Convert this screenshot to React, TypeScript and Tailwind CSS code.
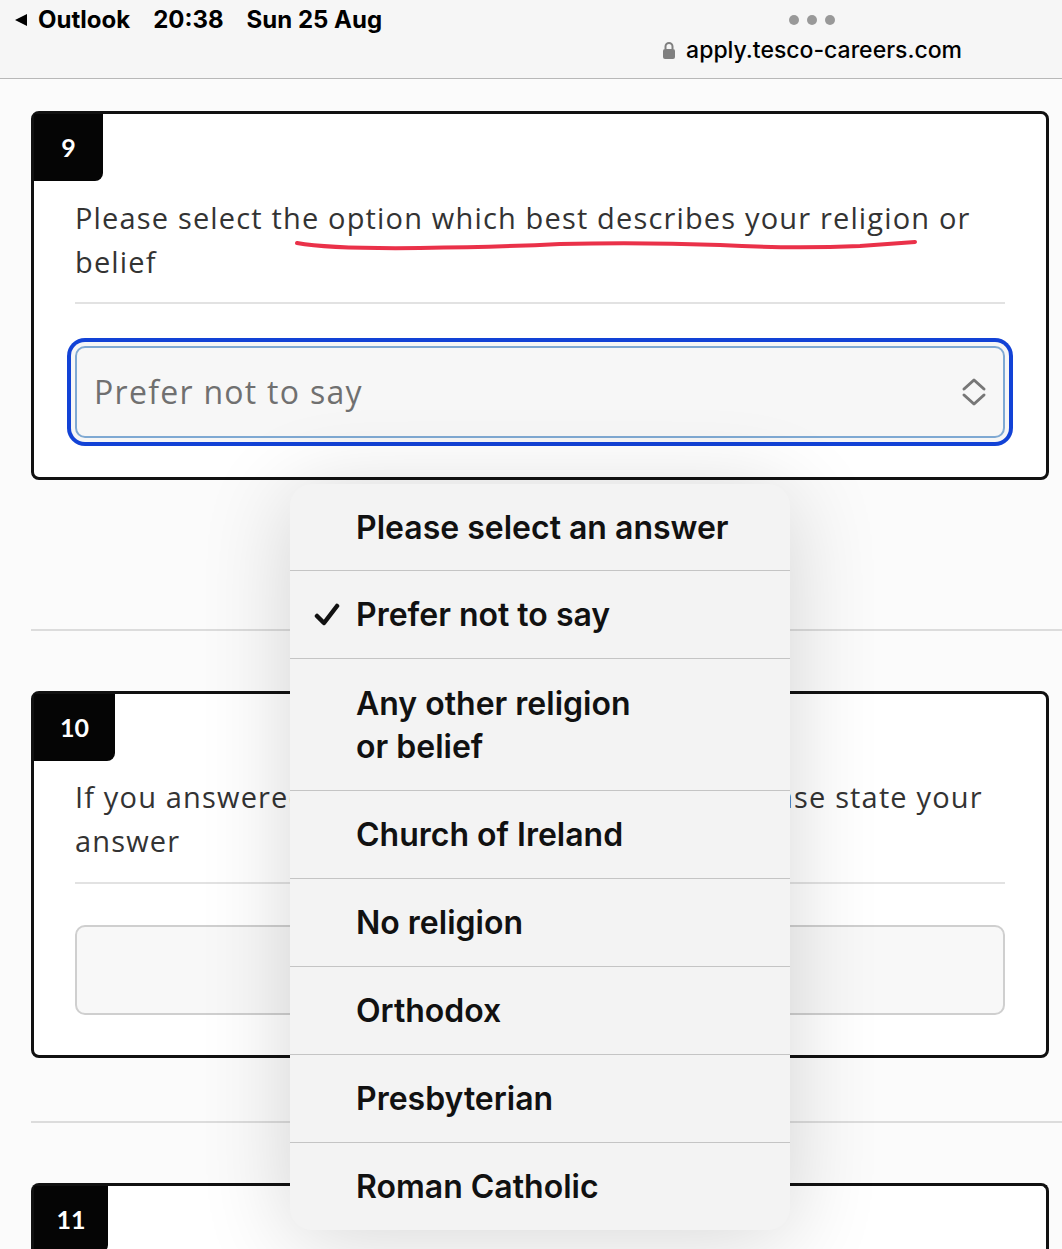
import React from 'react'

const options = [
  { label: 'Please select an answer' },
  { label: 'Prefer not to say', checked: true },
  { label: 'Any other religion', second: 'or belief' },
  { label: 'Church of Ireland' },
  { label: 'No religion' },
  { label: 'Orthodox' },
  { label: 'Presbyterian' },
  { label: 'Roman Catholic' },
]

function StatusBar() {
  return (
    <div className="h-[79px] bg-[#f6f6f6] border-b border-[#b8b8b8] flex justify-between pl-[14px] pr-[100px] font-['Inter',sans-serif] text-black">
      <div className="flex items-center h-[40px] text-[24px] font-bold">
        <svg width="14" height="14" viewBox="0 0 14 14" aria-hidden="true">
          <path d="M13 1 L1 7 L13 13 Z" fill="#000" />
        </svg>
        <span className="ml-[10px]">Outlook</span>
        <span className="ml-[23px]">20:38</span>
        <span className="ml-[23px]">Sun 25 Aug</span>
      </div>
      <div className="flex flex-col items-center pt-[15px]">
        <div className="flex gap-[8px]">
          <span className="w-[10px] h-[10px] rounded-full bg-[#999]" />
          <span className="w-[10px] h-[10px] rounded-full bg-[#999]" />
          <span className="w-[10px] h-[10px] rounded-full bg-[#999]" />
        </div>
        <div className="flex items-center mt-[8px] text-[23px] font-medium">
          <svg width="14" height="18" viewBox="0 0 14 18" aria-hidden="true">
            <path d="M3.5 8 V5.5 a3.5 3.5 0 0 1 7 0 V8" fill="none" stroke="#808080" strokeWidth="2" />
            <rect x="1" y="8" width="12" height="10" rx="2" fill="#808080" />
          </svg>
          <span className="ml-[10px]">apply.tesco-careers.com</span>
        </div>
      </div>
    </div>
  )
}

function Tab({ n, w }: { n: string; w: string }) {
  return (
    <div className={`${w} h-[67px] bg-[#050505] rounded-br-[8px] flex items-center justify-center text-white text-[25px] font-bold font-['Lato',sans-serif]`}>
      {n}
    </div>
  )
}

export default function App() {
  return (
    <div className="relative min-h-[1249px] bg-[#fbfbfb] overflow-hidden font-['Open_Sans',sans-serif]">
      <StatusBar />

      <div className="pl-[31px] pt-[32px]">
        {/* Question 9 */}
        <div className="w-[1018px] border-[3px] border-[#111] rounded-[8px] bg-white">
          <Tab n="9" w="w-[69px]" />
          <div className="px-[41px] pb-[39px]">
            <p className="mt-[15px] text-[29px] tracking-[0.04em] leading-[44px] text-[#333] pb-[18px] border-b-2 border-[#e2e2e2]">
              Please select the option which best describes your religion or belief
            </p>
            <div className="mt-[42px] h-[92px] rounded-[10px] border-2 border-[#7fa9d3] bg-[#f7f7f7] shadow-[0_0_0_4px_#f6f6f6,0_0_0_8px_#1242d6] flex items-center justify-between pl-[17px] pr-[16px]">
              <span className="text-[32px] tracking-[0.04em] text-[#707070]">Prefer not to say</span>
              <svg width="26" height="30" viewBox="0 0 26 30" aria-hidden="true">
                <path d="M3 12 L13 3 L23 12 M3 18 L13 27 L23 18" fill="none" stroke="#777" strokeWidth="3" strokeLinecap="round" strokeLinejoin="round" />
              </svg>
            </div>
          </div>
        </div>

        <div className="mt-[149px] h-[2px] bg-[#dcdcdc]" />

        {/* Question 10 */}
        <div className="mt-[60px] w-[1018px] border-[3px] border-[#111] rounded-[8px] bg-white">
          <Tab n="10" w="w-[81px]" />
          <div className="px-[41px] pb-[40px]">
            <p className="mt-[14px] text-[29px] tracking-[0.04em] leading-[44px] text-[#333] pb-[19px] border-b-2 border-[#e2e2e2]">
              <span className="whitespace-nowrap">If you answered 'Any other religion or belief' please state your</span>
              <br />
              answer
            </p>
            <div className="mt-[41px] h-[90px] rounded-[10px] border-2 border-[#cfcfcf] bg-[#f8f8f8]" />
          </div>
        </div>

        <div className="mt-[63px] h-[2px] bg-[#dcdcdc]" />

        {/* Question 11 */}
        <div className="mt-[60px] w-[1018px] h-[120px] border-[3px] border-b-0 border-[#111] rounded-t-[8px] bg-white">
          <Tab n="11" w="w-[74px]" />
        </div>
      </div>

      {/* hand-drawn annotation */}
      <svg className="absolute left-0 top-0 pointer-events-none" width="1062" height="300" aria-hidden="true">
        <path
          d="M297 243 Q 330 249 420 248 Q 500 247 560 244 Q 640 242 720 245 Q 790 249 860 246 L 915 242"
          fill="none"
          stroke="#ea3149"
          strokeWidth="4"
          strokeLinecap="round"
        />
      </svg>

      {/* native select popover */}
      <div className="absolute left-[290px] top-[484px] w-[500px] rounded-[22px] bg-[#f3f3f3] shadow-[0_10px_90px_rgba(0,0,0,0.16)] overflow-hidden font-['Inter',sans-serif] text-[#111]">
        {options.map((o, i) => (
          <div
            key={o.label}
            className={`relative flex flex-col justify-center pl-[66px] text-[32px] font-semibold leading-[43px] ${
              i === 0 ? 'h-[86px]' : 'border-t border-[#c4c4c4]'
            } ${o.second ? 'h-[132px]' : i === 0 ? '' : 'h-[88px]'}`}
          >
            {o.checked && (
              <svg className="absolute left-[24px] top-[32px]" width="26" height="24" viewBox="0 0 26 24" aria-hidden="true">
                <path d="M3 13 L10 20 L23 3" fill="none" stroke="#111" strokeWidth="4.5" strokeLinecap="round" strokeLinejoin="round" />
              </svg>
            )}
            <span>{o.label}</span>
            {o.second && <span>{o.second}</span>}
          </div>
        ))}
      </div>
    </div>
  )
}
